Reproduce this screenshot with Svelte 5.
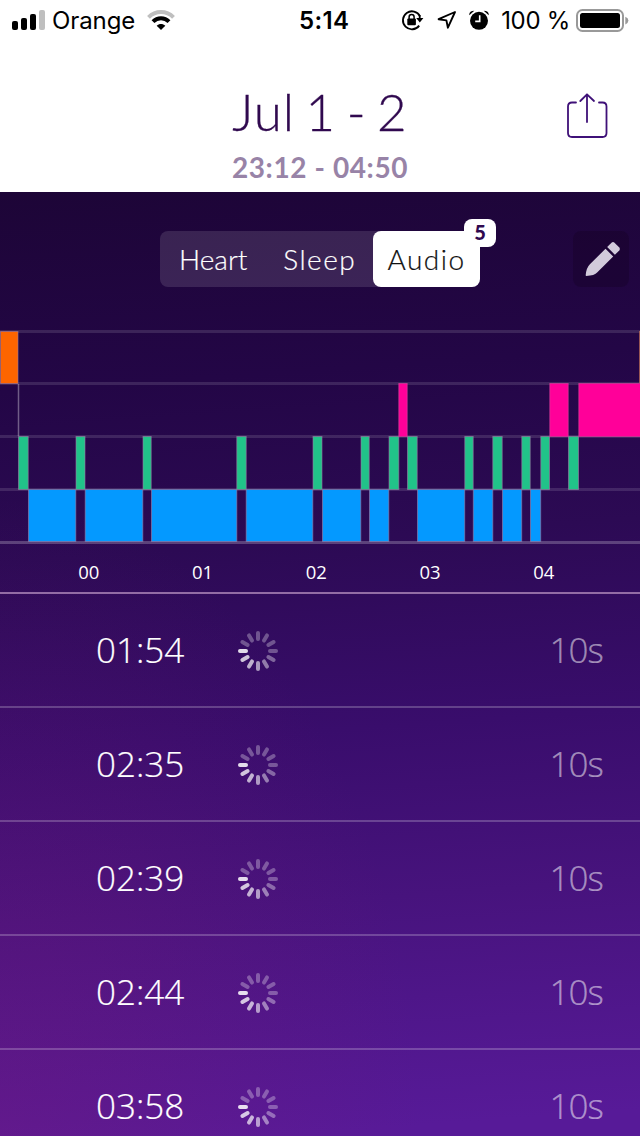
<script lang="ts">
  type Stage = 'awake' | 'rem' | 'light' | 'deep';

  const tabs = ['Heart', 'Sleep', 'Audio'];
  let activeTab = $state('Audio');

  const hours = ['00', '01', '02', '03', '04'];
  const recordings = ['01:54', '02:35', '02:39', '02:44', '03:58'];

  const stages: Record<Stage, { top: number; height: number }> = {
    awake: { top: 1, height: 53 },
    rem: { top: 53, height: 54 },
    light: { top: 106, height: 54 },
    deep: { top: 159, height: 53 }
  };

  // [stage, start, end]
  const segments: [Stage, number, number][] = [
    ['awake', 0, 18.5],
    ['light', 18, 28.7],
    ['deep', 28, 76.3],
    ['light', 75.5, 85.5],
    ['deep', 84.7, 143.3],
    ['light', 142.5, 151.7],
    ['deep', 151, 237.3],
    ['light', 236.3, 246.7],
    ['deep', 245.7, 313.3],
    ['light', 312.5, 322.5],
    ['deep', 322, 361.3],
    ['light', 360.5, 369.7],
    ['deep', 369, 389.3],
    ['light', 388.5, 399.3],
    ['rem', 398.3, 407.7],
    ['light', 407, 417.7],
    ['deep', 417, 465.2],
    ['light', 464.3, 473.7],
    ['deep', 472.8, 493.3],
    ['light', 492.3, 502.7],
    ['deep', 502, 522.2],
    ['light', 521.3, 530.7],
    ['deep', 530, 541.2],
    ['light', 540.3, 550],
    ['rem', 549.3, 568.7],
    ['light', 568, 579],
    ['rem', 578.3, 641]
  ];

  // clockwise from 12 o'clock
  const spokes = [0.3, 0.3, 0.3, 0.3, 0.37, 0.46, 0.58, 0.68, 0.76, 0.86, 0.3, 0.3];
</script>

<div class="screen">
  <div class="status-bar">
    <svg class="signal" width="34" height="20" viewBox="0 0 34 20">
      <rect x="0" y="11" width="6" height="9" rx="2" />
      <rect x="9" y="8" width="6" height="12" rx="2" />
      <rect x="18" y="4" width="6" height="16" rx="2" />
      <rect x="27" y="0" width="6" height="20" rx="2" fill="#bfbfbf" />
    </svg>
    <span class="carrier">Orange</span>
    <svg class="wifi" width="28" height="21" viewBox="0 0 28 21">
      <g fill="none" stroke-width="4">
        <path d="M1.5 7.3C8.5 .3 19.5 .3 26.5 7.3" stroke="#bfbfbf" />
        <path d="M6 11.7C10.5 7.2 17.5 7.2 22 11.7" stroke="#000" />
      </g>
      <path d="M9.7 15.7C12.1 13.5 15.9 13.5 18.3 15.7L14 20Z" />
    </svg>
    <span class="clock">5:14</span>
    <div class="indicators">
      <svg width="24" height="22" viewBox="0 0 24 22">
        <path d="M18.2 16.6A9 9 0 1 1 19 7.3" fill="none" stroke="#000" stroke-width="1.8" />
        <path d="M18.7 6.2V10" stroke="#000" stroke-width="1.8" />
        <path d="M15.2 9H22.4L18.8 13.6Z" />
        <rect x="6.3" y="9.6" width="8.6" height="6.6" rx="1" />
        <path d="M8.1 10V8a2.5 2.5 0 0 1 5 0v2" fill="none" stroke="#000" stroke-width="1.5" />
      </svg>
      <svg class="location" width="20" height="20" viewBox="0 0 20 20">
        <path
          d="M18 2L1.6 9.2L9.4 10.4L10.9 17.7Z"
          fill="none"
          stroke="#000"
          stroke-width="1.9"
          stroke-linejoin="round"
        />
      </svg>
      <svg class="alarm" width="20" height="20" viewBox="0 0 20 20">
        <circle cx="10" cy="10.8" r="9" />
        <path d="M.3 5.2Q-.2 1 5.3 .8ZM19.7 5.2Q20.2 1 14.7 .8Z" />
        <path d="M10.7 5.2V11.4H6.2" fill="none" stroke="#fff" stroke-width="1.6" />
      </svg>
      <span class="percent">100 %</span>
      <svg class="battery" width="53" height="24" viewBox="0 0 53 24">
        <rect x="1" y="1" width="46" height="21" rx="5.5" fill="none" stroke="#999" stroke-width="2" />
        <rect x="4" y="4" width="40" height="15" rx="2.5" />
        <path d="M49.3 7.8Q52.4 9 52.4 11.5T49.3 15.4Z" fill="#999" />
      </svg>
    </div>
  </div>

  <header>
    <div class="heading">
      <h1>Jul 1 - 2</h1>
      <p>23:12 - 04:50</p>
    </div>
    <button class="share" type="button" aria-label="Share">
      <svg width="42" height="46" viewBox="0 0 42 46">
        <g fill="none" stroke="#3f1178" stroke-width="1.8" stroke-linecap="round" stroke-linejoin="round">
          <path d="M10 9.5H6Q2 9.5 2 13.5V40Q2 44 6 44H36.5Q40.5 44 40.5 40V13.5Q40.5 9.5 36.5 9.5H33" />
          <path d="M21 29V1.3M14.3 8L21 1.3L28 8" />
        </g>
      </svg>
    </button>
  </header>

  <main>
    <div class="toolbar">
      <div class="tabs" role="tablist">
        {#each tabs as tab}
          <button
            type="button"
            role="tab"
            class="tab {tab.toLowerCase()}"
            class:active={activeTab === tab}
            aria-selected={activeTab === tab}
            onclick={() => (activeTab = tab)}
          >
            {tab}
          </button>
        {/each}
        <span class="badge">{recordings.length}</span>
      </div>
      <button class="edit" type="button" aria-label="Edit">
        <svg width="36" height="36" viewBox="0 0 36 36" fill="#d2cbdb">
          <path d="M20.5 7.8L28.2 15.5L12.4 31.3Q9.4 34.7 1.3 35Q.6 34.7 .7 34Q1.3 26.8 4.9 23.2Z" />
          <path d="M22.2 6.1L26.5 1.7Q28 .3 29.5 1.7L34.3 6.5Q35.6 8 34.3 9.5L29.9 13.8Z" />
        </svg>
      </button>
    </div>

    <svg class="hypnogram" width="640" height="216" viewBox="0 0 640 216">
      {#each [1.5, 53.5, 106.5, 159.5, 212.5] as y, i}
        <rect class="grid" class:base={i === 4} x="0" y={y - 1.5} width="640" height="3" />
      {/each}
      <path class="jump" d="M18.5 54V106" />
      <path class="end" d="M639.5 1V53" />
      {#each segments as [stage, start, end]}
        <rect
          class="segment {stage}"
          x={start + 0.5}
          y={stages[stage].top + 0.5}
          width={end - start - 1}
          height={stages[stage].height - 1}
        />
      {/each}
    </svg>

    <div class="hours">
      {#each hours as hour}
        <span>{hour}</span>
      {/each}
    </div>

    <ul class="recordings">
      {#each recordings as time}
        <li>
          <span class="time">{time}</span>
          <svg class="spinner" width="40" height="40" viewBox="-20 -20 40 40">
            {#each spokes as opacity, i}
              <rect x="-2" y="-20" width="4" height="10" rx="2" fill="#fff" {opacity} transform="rotate({i * 30})" />
            {/each}
          </svg>
          <span class="duration">10s</span>
        </li>
      {/each}
    </ul>
  </main>
</div>

<style>
  :global(body) {
    margin: 0;
  }

  .screen {
    display: flex;
    flex-direction: column;
    width: 640px;
    height: 1136px;
    overflow: hidden;
    background: #fff;
    font-family: Lato, 'Liberation Sans', sans-serif;
  }

  button {
    padding: 0;
    border: none;
    background: none;
    font: inherit;
    cursor: pointer;
  }

  svg {
    display: block;
    flex: none;
  }

  .status-bar {
    display: flex;
    flex: none;
    align-items: center;
    box-sizing: border-box;
    height: 40px;
    padding: 0 11px 0 12px;
    font-family: Inter, 'Liberation Sans', sans-serif;
    font-size: 24px;
    line-height: 38px;
    color: #000;
    white-space: nowrap;
  }

  .status-bar span {
    padding-top: 2px;
  }

  .carrier {
    width: 88px;
    margin-left: 6px;
    letter-spacing: -0.1px;
  }

  .wifi {
    margin-left: 7px;
  }

  .clock {
    margin-left: 124px;
    font-weight: 600;
    letter-spacing: 0.4px;
  }

  .indicators {
    display: flex;
    align-items: center;
    margin-left: auto;
  }

  .location {
    margin-left: 12px;
  }

  .alarm {
    margin-left: 12px;
  }

  .percent {
    margin: 0 6px 0 12px;
    letter-spacing: -0.3px;
  }

  .battery {
    margin-top: 2px;
  }

  header {
    position: relative;
    flex: none;
    height: 152px;
  }

  .heading {
    display: flex;
    flex-direction: column;
    align-items: center;
    padding-top: 41px;
  }

  h1 {
    margin: 0;
    font-size: 51px;
    font-weight: 300;
    line-height: 62px;
    letter-spacing: 1px;
    word-spacing: -4.3px;
    color: #30094f;
    -webkit-text-stroke: 0.3px;
  }

  .heading p {
    margin: 7px 0 0;
    font-size: 28px;
    font-weight: 700;
    line-height: 34px;
    letter-spacing: 0.6px;
    color: #9883a7;
  }

  .share {
    position: absolute;
    top: 53px;
    right: 32px;
  }

  main {
    flex: 1;
    min-height: 0;
    background:
      radial-gradient(ellipse 420px 640px at 0 100%, rgba(125, 25, 120, 0.3), rgba(125, 25, 120, 0)),
      linear-gradient(176deg, #1d0537 0, #230646 200px, #2c0a54 370px, #390d6c 560px, #47137d 730px, #571a98 960px);
  }

  .toolbar {
    position: relative;
    display: flex;
    align-items: center;
    justify-content: center;
    height: 56px;
    padding-top: 39px;
  }

  .tabs {
    position: relative;
    display: flex;
    width: 320px;
    height: 56px;
    border-radius: 8px;
    background: rgba(255, 255, 255, 0.12);
  }

  .tab {
    width: 106.5px;
    border-radius: 8px;
    font-size: 28px;
    font-weight: 300;
    line-height: 52px;
    color: #fff;
    -webkit-text-stroke: 0.2px;
  }

  .tab.sleep,
  .tab.audio {
    letter-spacing: 1.5px;
  }

  .tab.active {
    width: 107px;
    background: #fff;
    color: #111;
  }

  .badge {
    position: absolute;
    top: -12px;
    right: -16px;
    width: 32px;
    height: 28px;
    border-radius: 8px;
    background: #fff;
    font-size: 20px;
    font-weight: 900;
    line-height: 26px;
    text-align: center;
    color: #30094f;
  }

  .edit {
    position: absolute;
    right: 11px;
    display: flex;
    align-items: center;
    justify-content: center;
    width: 56px;
    height: 56px;
    border-radius: 8px;
    background: rgba(15, 0, 25, 0.25);
  }

  .edit svg {
    margin-left: 4px;
  }

  .hypnogram {
    margin-top: 43px;
  }

  .grid {
    fill: rgba(255, 255, 255, 0.12);
  }

  .grid.base {
    fill: rgba(255, 255, 255, 0.23);
  }

  .jump {
    stroke: rgba(255, 255, 255, 0.35);
    stroke-width: 1.5;
  }

  .end {
    stroke: rgba(200, 120, 90, 0.7);
    stroke-width: 1;
  }

  .segment {
    stroke: rgba(155, 125, 165, 0.6);
    stroke-width: 1;
  }

  .awake {
    fill: #fd6500;
  }

  .rem {
    fill: #ff0099;
    stroke: rgba(220, 70, 160, 0.6);
  }

  .light {
    fill: #21c389;
  }

  .deep {
    fill: #0499ff;
  }

  .hours {
    display: flex;
    box-sizing: border-box;
    height: 48px;
    padding-left: 32px;
    border-bottom: 2px solid #936da5;
    font-family: 'Open Sans', 'Noto Sans', sans-serif;
    font-size: 18.5px;
    line-height: 51px;
    color: #fff;
  }

  .hours span {
    width: 113.75px;
    text-align: center;
  }

  .recordings {
    margin: 0;
    padding: 0;
    list-style: none;
  }

  .recordings li {
    display: flex;
    align-items: center;
    box-sizing: border-box;
    height: 114px;
    padding: 0 37px 0 96px;
    border-bottom: 2px solid rgba(255, 255, 255, 0.22);
    font-family: 'Open Sans', 'Noto Sans', sans-serif;
    font-size: 35px;
    font-weight: 300;
    line-height: 112px;
    color: #fff;
    -webkit-text-stroke: 0.2px;
  }

  .time {
    width: 142px;
  }

  .spinner {
    margin-top: 2px;
  }

  .duration {
    margin-left: auto;
    letter-spacing: -0.9px;
    color: rgba(255, 255, 255, 0.5);
  }
</style>
